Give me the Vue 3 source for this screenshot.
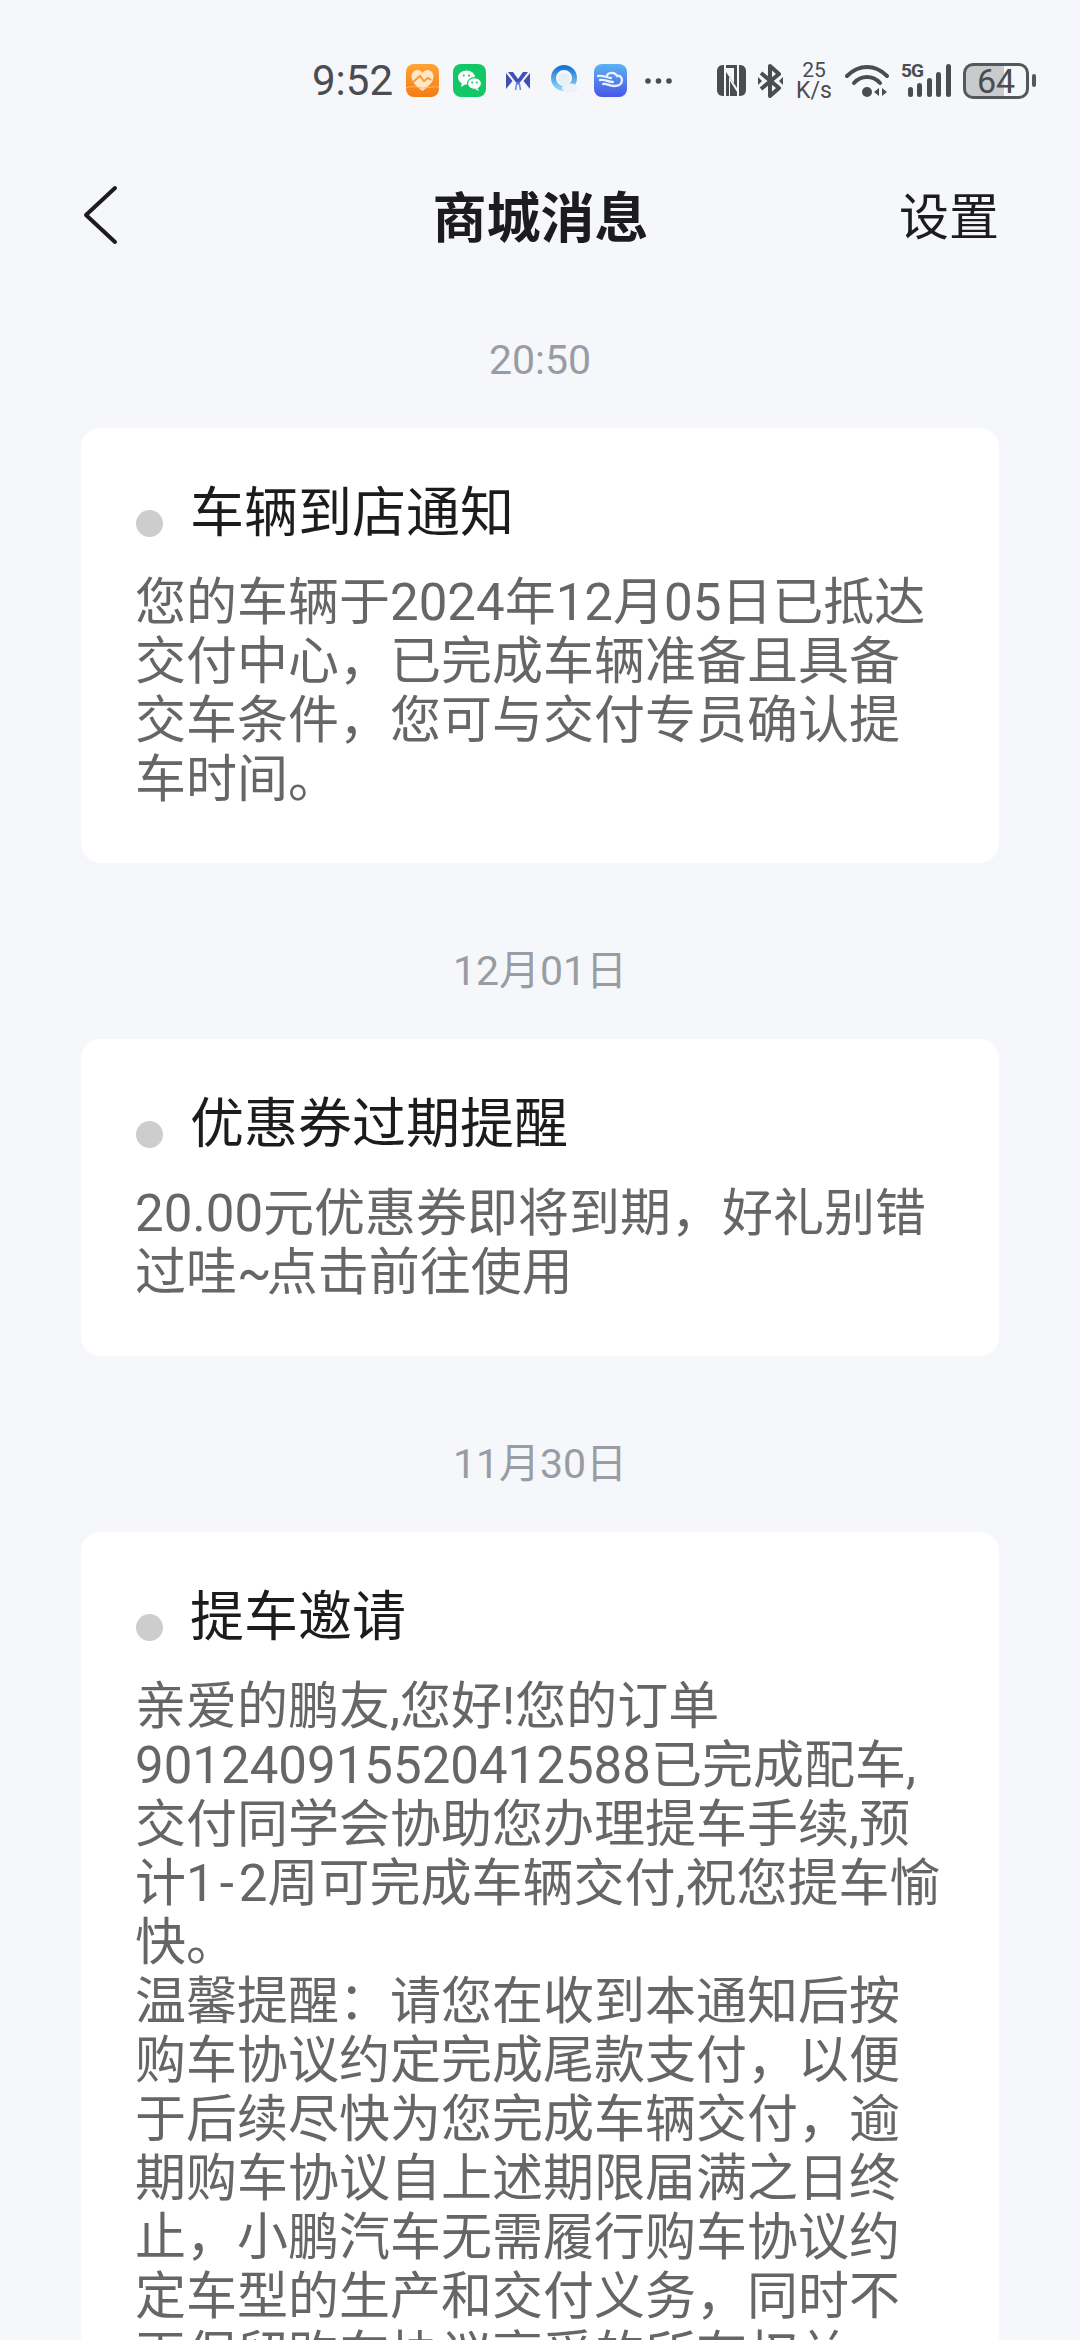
<template>
  <div class="page">
    <div class="status-bar">
      <span class="clock">9:52</span>
      <div class="app-icons">
        <svg class="app-icon" viewBox="0 0 33 33">
          <defs>
            <linearGradient id="orangeBg" x1="0" y1="0" x2="0" y2="1">
              <stop offset="0" stop-color="#ffa336" />
              <stop offset="1" stop-color="#f57c12" />
            </linearGradient>
          </defs>
          <rect width="33" height="33" rx="8" fill="url(#orangeBg)" />
          <path d="M16.5 27 C9 21.5 5.500 17.500 5.500 12.500 C5.500 8.500 8.500 6 11.500 6 C13.500 6 15.500 7 16.500 9 C17.500 7 19.500 6 21.500 6 C24.500 6 27.500 8.500 27.500 12.500 C27.500 17.500 24 21.500 16.500 27 Z" fill="#ffe6c4" />
          <path d="M7 18 L14 12 L18 17 L22 14 L25 16" fill="none" stroke="#f89a36" stroke-width="2" />
          <path d="M0 24 C8 21 12 24 17 24 C23 24 28 22 33 23" fill="none" stroke="#ffb765" stroke-width="1" />
        </svg>
        <svg class="app-icon" viewBox="0 0 33 33">
          <rect width="33" height="33" rx="8" fill="#14c766" />
          <ellipse cx="13.500" cy="13.500" rx="8.500" ry="7" fill="#fff" />
          <path d="M9 18 L8 23 L13 20 Z" fill="#fff" />
          <ellipse cx="21.500" cy="19.500" rx="7" ry="5.800" fill="#fff" stroke="#14c766" stroke-width="1.200" />
          <path d="M24.500 24 L26 27 L22 25 Z" fill="#fff" />
          <circle cx="10.800" cy="11.500" r="1.100" fill="#14c766" />
          <circle cx="16" cy="11.500" r="1.100" fill="#14c766" />
          <circle cx="19.200" cy="18.500" r="1" fill="#14c766" />
          <circle cx="23.800" cy="18.500" r="1" fill="#14c766" />
        </svg>
        <svg class="logo-m" viewBox="0 0 26 20">
          <path d="M1 2 L1 18 L7.500 10 Z M25 2 L25 18 L18.500 10 Z" fill="#3f51b5" />
          <path d="M3 1 L8 1 L13 8 L18 1 L23 1 L13 14 Z" fill="#3f51b5" />
          <path d="M10.500 19 L12 11 M15.500 19 L14 11" stroke="#6f86e0" stroke-width="1.500" />
        </svg>
        <svg class="logo-q" viewBox="0 0 30 33">
          <defs>
            <linearGradient id="qRing" x1="0" y1="0" x2="0" y2="1">
              <stop offset="0" stop-color="#1577d8" />
              <stop offset="1" stop-color="#8fd3f4" />
            </linearGradient>
          </defs>
          <circle cx="14" cy="14" r="10.500" fill="none" stroke="url(#qRing)" stroke-width="5" />
          <circle cx="14" cy="15" r="6" fill="#e6eef7" />
          <ellipse cx="20" cy="24" rx="8" ry="4.500" fill="#eef1f6" />
        </svg>
        <svg class="app-icon" viewBox="0 0 33 33">
          <defs>
            <linearGradient id="blueBg" x1="0" y1="0" x2="0" y2="1">
              <stop offset="0" stop-color="#5ab3f2" />
              <stop offset="1" stop-color="#4a55ea" />
            </linearGradient>
          </defs>
          <rect width="33" height="33" rx="8" fill="url(#blueBg)" />
          <path d="M4 12 C10 11 13 14 17 14 M6 16 C11 15 14 18 19 18 M9 20 C12 19 15 22 20 22 C25 22 28 20 28 16 C28 13 25 11 23 12 C21 8 15 8 13 11" fill="none" stroke="#e6f2ff" stroke-width="2.300" stroke-linecap="round" />
        </svg>
        <svg class="more" viewBox="0 0 27 6">
          <circle cx="3" cy="3" r="2.800" fill="#4a4c50" />
          <circle cx="13.500" cy="3" r="2.800" fill="#4a4c50" />
          <circle cx="24" cy="3" r="2.800" fill="#4a4c50" />
        </svg>
      </div>
      <div class="system-icons">
        <svg class="nfc" viewBox="0 0 31 33">
          <path d="M7 1 H8 V32 H7 C3 32 1 29 1 26 V7 C1 4 3 1 7 1 Z M23 1 H24 C28 1 30 4 30 7 V26 C30 29 28 32 24 32 H23 Z" fill="#4a4c50" />
          <path d="M10 1 H21 V24 L13 12 V32 H10 V8 L18 20 V4 H10 Z M14 32 V17 L21 28 V32 Z" fill="#4a4c50" />
        </svg>
        <svg class="bluetooth" viewBox="0 0 25 34">
          <path d="M3 9 L21 24 L12 32 V2 L21 10 L3 25" fill="none" stroke="#4a4c50" stroke-width="4" stroke-linejoin="round" />
          <path d="M0 13 L4 17 L0 21 Z M25 13 L21 17 L25 21 Z" fill="#4a4c50" />
        </svg>
        <div class="speed">
          <span class="speed-num">25</span>
          <span class="speed-unit">K/s</span>
        </div>
        <svg class="wifi" viewBox="0 0 44 34">
          <path d="M2 12 C14 0 30 0 42 12" fill="none" stroke="#4a4c50" stroke-width="4" stroke-linecap="round" />
          <path d="M9 19 C16 11 28 11 35 19" fill="none" stroke="#4a4c50" stroke-width="4" stroke-linecap="round" />
          <circle cx="22" cy="28" r="5" fill="#4a4c50" />
          <path d="M34 24 V32 L29 28 Z M37 24 V32 L42 28 Z" fill="#4a4c50" />
        </svg>
        <div class="signal">
          <span class="five-g">5G</span>
          <svg class="bars" viewBox="0 0 43 33">
            <rect x="0" y="23" width="5" height="10" rx="2.500" fill="#4a4c50" />
            <rect x="9" y="19" width="5" height="14" rx="2.500" fill="#4a4c50" />
            <rect x="19" y="14" width="5" height="19" rx="2.500" fill="#4a4c50" />
            <rect x="28" y="8" width="5" height="25" rx="2.500" fill="#4a4c50" />
            <rect x="38" y="0" width="5" height="33" rx="2.500" fill="#4a4c50" />
          </svg>
        </div>
        <div class="battery">
          <div class="battery-body">64</div>
          <span class="battery-nub"></span>
        </div>
      </div>
    </div>

    <header class="nav">
      <div class="nav-side">
        <svg class="back" viewBox="0 0 36 60">
          <path d="M33 3 L4 30 L33 57" fill="none" stroke="#1c1c1e" stroke-width="4" stroke-linecap="round" stroke-linejoin="round" />
        </svg>
      </div>
      <h1 class="nav-title">商城消息</h1>
      <div class="nav-side nav-side-right">
        <span class="nav-action">设置</span>
      </div>
    </header>

    <main class="list">
      <section v-for="msg in messages" :key="msg.time" class="group">
        <div class="time">{{ msg.time }}</div>
        <article class="card">
          <div class="card-head">
            <span class="dot"></span>
            <h2 class="card-title">{{ msg.title }}</h2>
          </div>
          <p v-for="line in msg.lines" :key="line" class="line">
            <span
              v-for="(part, i) in line.split(/([-~])/)"
              :key="i"
              :class="{ hyphen: part === '-', tilde: part === '~' }"
            >{{ part }}</span>
          </p>
        </article>
      </section>
    </main>
  </div>
</template>

<script setup>
const messages = [
  {
    time: '20:50',
    title: '车辆到店通知',
    lines: [
      '您的车辆于2024年12月05日已抵达',
      '交付中心，已完成车辆准备且具备',
      '交车条件，您可与交付专员确认提',
      '车时间。',
    ],
  },
  {
    time: '12月01日',
    title: '优惠券过期提醒',
    lines: ['20.00元优惠券即将到期，好礼别错', '过哇~点击前往使用'],
  },
  {
    time: '11月30日',
    title: '提车邀请',
    lines: [
      '亲爱的鹏友,您好!您的订单',
      '901240915520412588已完成配车,',
      '交付同学会协助您办理提车手续,预',
      '计1-2周可完成车辆交付,祝您提车愉',
      '快。',
      '温馨提醒：请您在收到本通知后按',
      '购车协议约定完成尾款支付，以便',
      '于后续尽快为您完成车辆交付，逾',
      '期购车协议自上述期限届满之日终',
      '止，小鹏汽车无需履行购车协议约',
      '定车型的生产和交付义务，同时不',
      '再保留购车协议享受的所有权益',
    ],
  },
]
</script>

<style>
html,
body {
  margin: 0;
  background: #f5f7fb;
}
</style>

<style scoped>
.page {
  width: 1080px;
  height: 2340px;
  overflow: hidden;
  background: #f5f7fb;
  font-family: Roboto, "Noto Sans CJK SC", sans-serif;
}

.status-bar {
  height: 160px;
  box-sizing: border-box;
  padding: 60px 44px 0 312px;
  display: flex;
  align-items: flex-start;
  color: #4a4c50;
}

.clock {
  width: 94px;
  font-size: 42px;
  line-height: 40px;
  margin-top: 1px;
}

.app-icons {
  display: flex;
  align-items: center;
  height: 41px;
  width: 310px;
}

.app-icon {
  width: 33px;
  height: 33px;
  margin-right: 14px;
  flex: none;
}

.logo-m {
  width: 26px;
  height: 20px;
  margin: 0 19px 0 5px;
  flex: none;
}

.logo-q {
  width: 30px;
  height: 33px;
  margin-right: 14px;
  flex: none;
}

.more {
  width: 27px;
  height: 6px;
  margin-left: 4px;
  flex: none;
}

.system-icons {
  display: flex;
  align-items: center;
  height: 41px;
}

.nfc {
  width: 31px;
  height: 33px;
  margin-right: 11px;
  flex: none;
}

.bluetooth {
  width: 25px;
  height: 34px;
  margin-right: 12px;
  flex: none;
}

.speed {
  width: 38px;
  margin-right: 12px;
  display: flex;
  flex-direction: column;
  align-items: center;
  gap: 1px;
}

.speed-num {
  font-size: 21px;
  line-height: 20px;
}

.speed-unit {
  font-size: 23px;
  line-height: 20px;
}

.wifi {
  width: 44px;
  height: 34px;
  margin-right: 12px;
  flex: none;
}

.signal {
  position: relative;
  width: 50px;
  height: 33px;
  margin-right: 12px;
  display: flex;
  justify-content: flex-end;
}

.bars {
  width: 43px;
  height: 33px;
}

.five-g {
  position: absolute;
  left: 0;
  top: -3px;
  font-size: 19px;
  line-height: 20px;
  font-weight: 700;
  letter-spacing: -1px;
}

.battery {
  display: flex;
  align-items: center;
}

.battery-body {
  width: 66px;
  height: 36px;
  box-sizing: border-box;
  border: 3px solid #55575b;
  border-radius: 10px;
  background: linear-gradient(to right, #c9cacd 64%, #f5f7fb 64%);
  font-size: 34px;
  line-height: 30px;
  text-align: center;
  color: #4a4c50;
}

.battery-nub {
  width: 4px;
  height: 13px;
  margin-left: 3px;
  border-radius: 2px;
  background: #55575b;
}

.nav {
  height: 110px;
  padding: 0 81px 0 82px;
  display: flex;
  align-items: center;
}

.nav-side {
  flex: 1;
  display: flex;
  align-items: center;
}

.nav-side-right {
  justify-content: flex-end;
}

.back {
  width: 36px;
  height: 60px;
}

.nav-title {
  margin: 0 0 2px;
  font-size: 54px;
  font-weight: 700;
  color: #1c1c1e;
}

.nav-action {
  margin-bottom: 5px;
  font-size: 50px;
  color: #1c1c1e;
}

.list {
  padding: 0 81px;
}

.time {
  height: 60px;
  margin: 78px 0 38px;
  font-size: 41px;
  line-height: 60px;
  text-align: center;
  color: #9a9ca3;
}

.group:first-child .time {
  margin-top: 60px;
}

.card {
  box-sizing: border-box;
  padding: 51px 0 54px 54px;
  background: #fff;
  border-radius: 20px;
}

.card-head {
  display: flex;
  align-items: flex-start;
  height: 70px;
  margin-bottom: 24px;
}

.dot {
  width: 27px;
  height: 27px;
  margin: 31px 0 0 1px;
  border-radius: 50%;
  background: #cdcdcd;
  flex: none;
}

.card-title {
  margin: 0 0 0 27px;
  font-size: 54px;
  font-weight: 400;
  line-height: 70px;
  color: #1c1c1e;
}

.line {
  margin: 0;
  font-size: 51px;
  line-height: 59px;
  white-space: nowrap;
  color: #666;
}

.hyphen {
  margin: 0 5px;
}

.tilde {
  letter-spacing: -5px;
}
</style>
